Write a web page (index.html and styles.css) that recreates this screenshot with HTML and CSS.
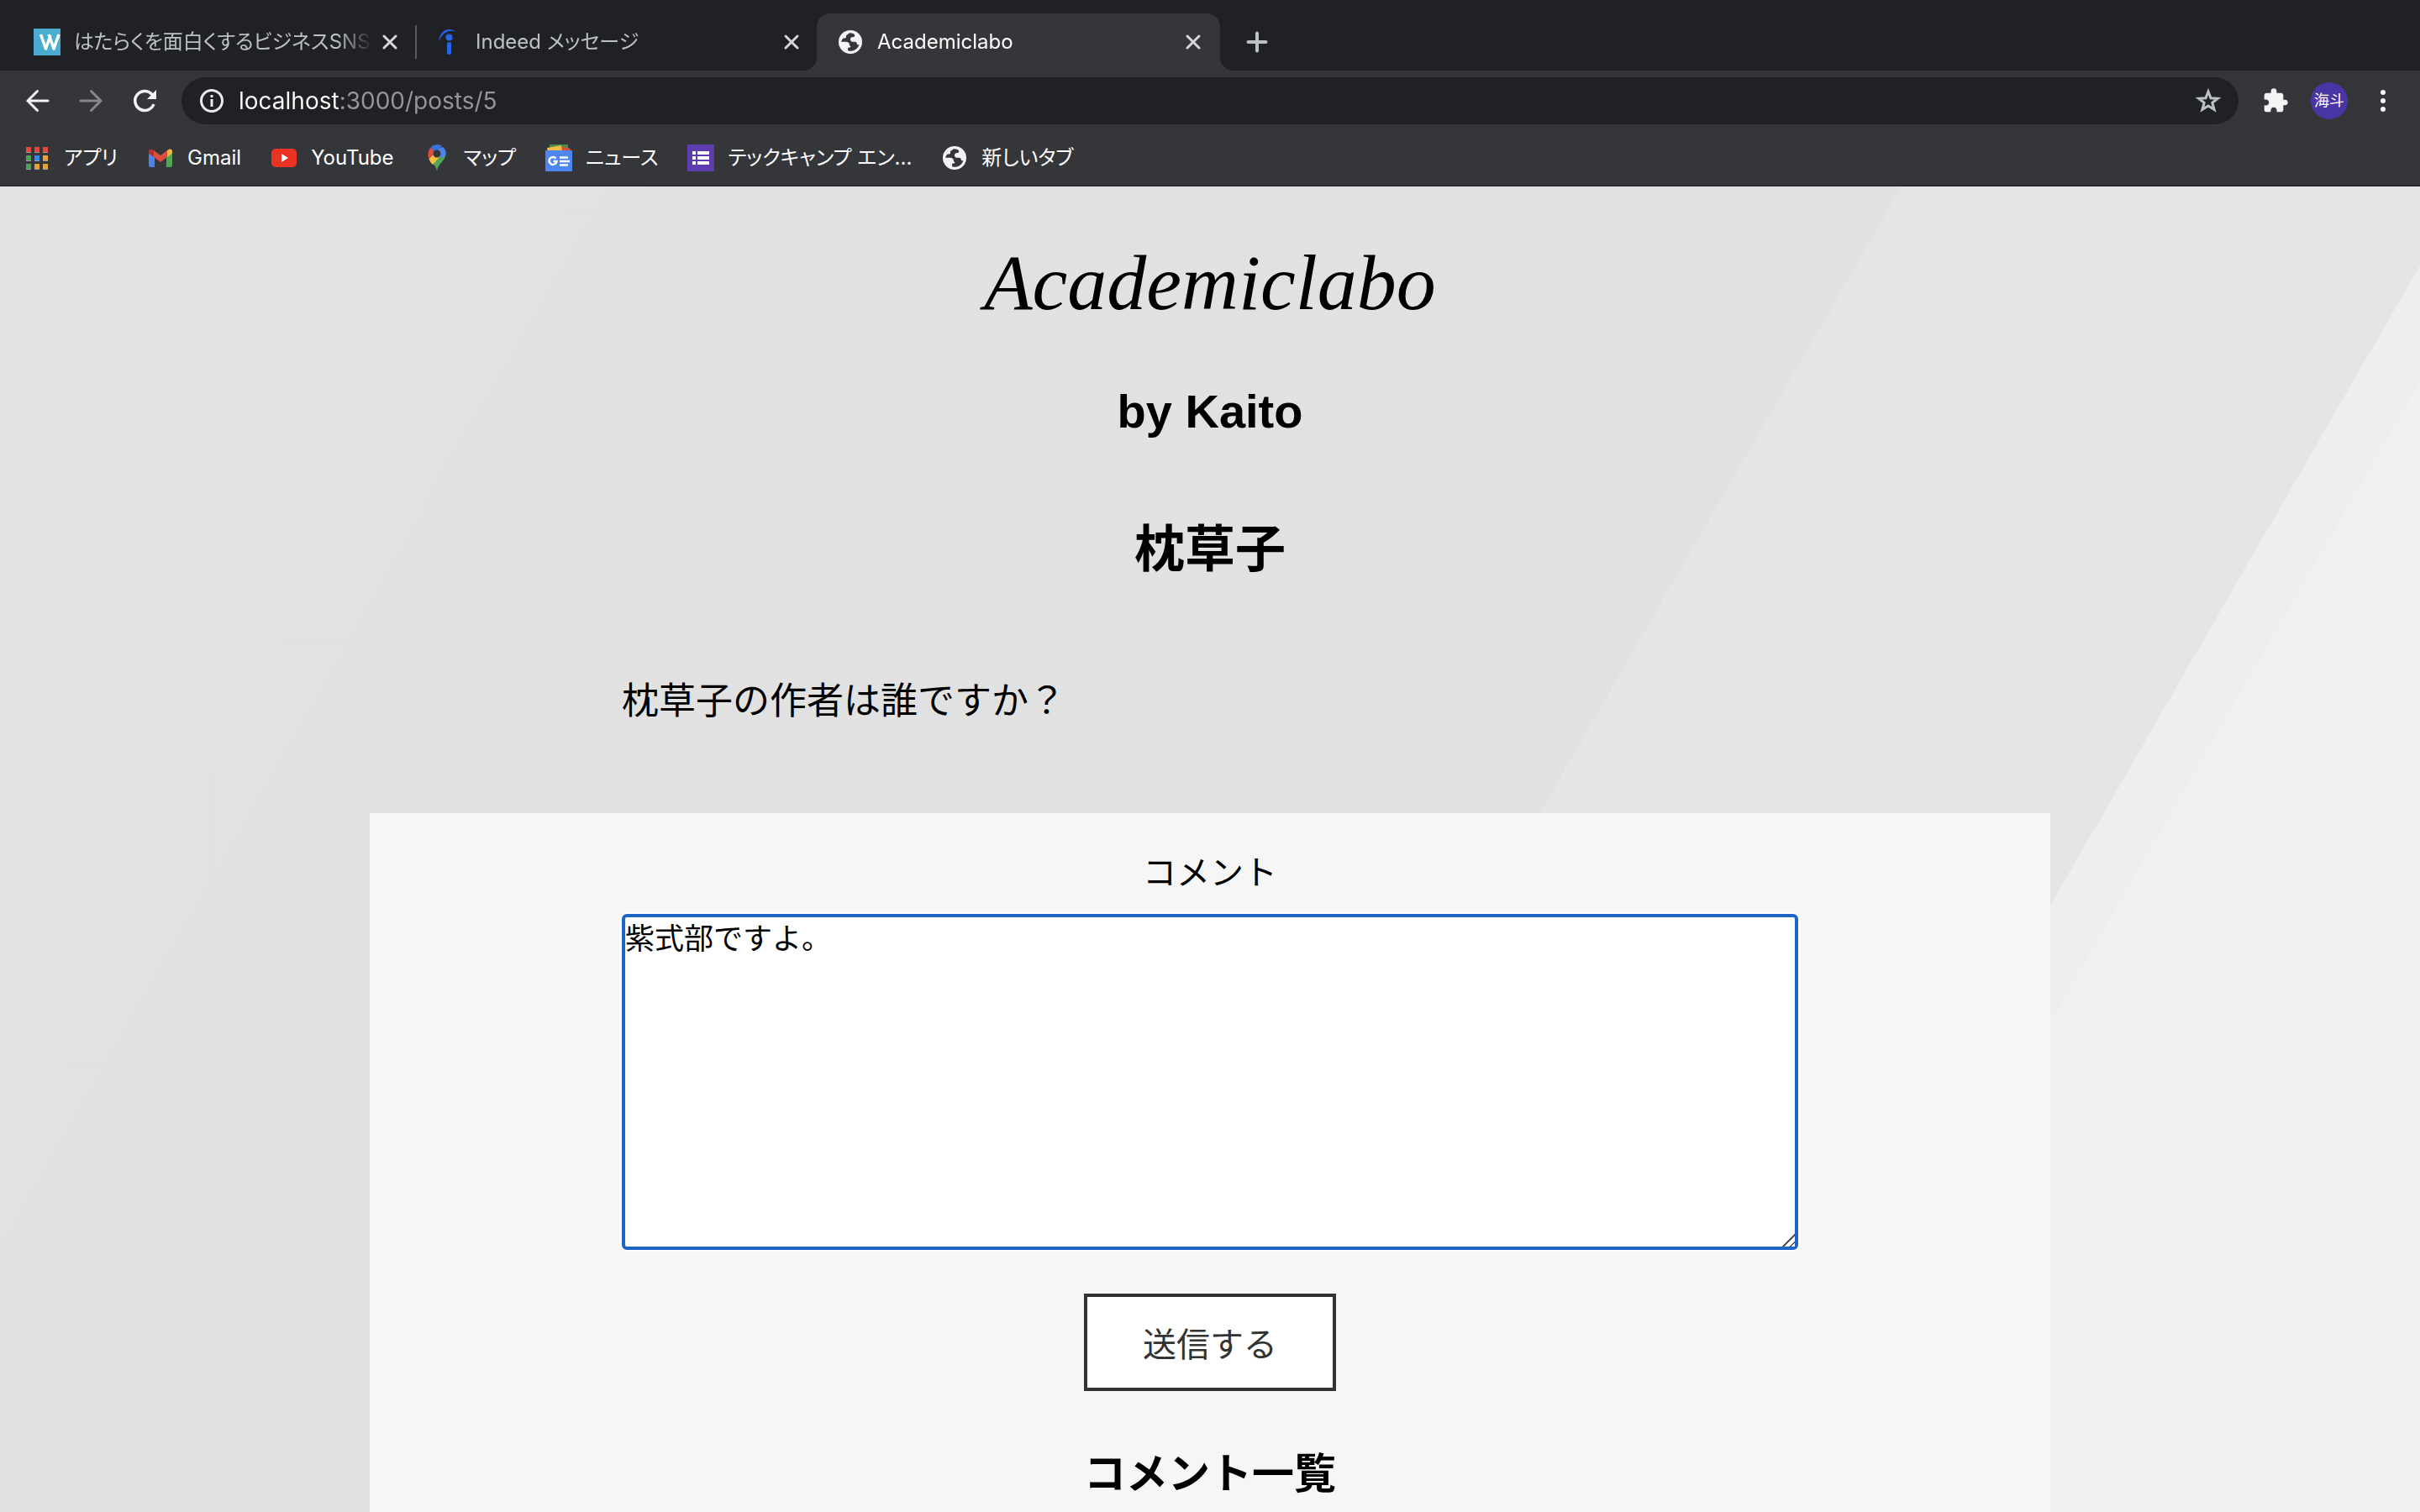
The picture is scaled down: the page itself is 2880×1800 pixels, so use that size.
FILE: index.html
```html
<!DOCTYPE html>
<html lang="ja">
<head>
<meta charset="utf-8">
<title>Academiclabo</title>
<link rel="stylesheet" href="styles.css">
</head>
<body>
<svg class="defs" aria-hidden="true">
  <symbol id="globe" viewBox="0 0 28 28">
    <circle cx="14" cy="14" r="14" fill="#f1f3f4"/>
    <path d="M12.600 3.400C11 5 8.500 5.200 9 7.400c.4 1.800-1 2-2.600 2.200C4.600 9.800 4 11 3.100 13.800h5.600c2.400 0 4.300 1.200 4.300 3.600 0 1.100 1 1.200 1.300 1.800.2.800-.5 1.200-1.700 1.400-1.500.3-1.800 1.200-1.500 2.600l.4 1.200c5.400 1.600 11-1.800 13-7.200-2 .3-2.700-.3-2.800-1.500-.1-2-1.600-2.200-3.500-2-2.200.2-4.200-.5-4.200-2.800 0-2 1.400-2.900 3.400-2.800 1.800.1 1.400-1.600 1.900-2.700C17.500 3.600 15 3 12.600 3.400z" fill="#35363a"/>
  </symbol>
  <symbol id="close" viewBox="0 0 32 32">
    <path d="M9 9l14 14M23 9L9 23" stroke="currentColor" stroke-width="3" stroke-linecap="round"/>
  </symbol>
</svg>

<header class="browser">
  <nav class="tabs" aria-label="タブ">
    <div class="tab">
      <svg class="icon" viewBox="0 0 32 32"><path fill="#4aaccf" d="M0 0h32v32H0z"/><path d="M8.500 7l6 17L20 8M18 7l6 17 6-17" fill="none" stroke="#fff" stroke-width="3.500" stroke-linejoin="round"/></svg>
      <span class="tab-title">はたらくを面白くするビジネスSNS</span>
      <button class="tab-close" aria-label="閉じる"><svg class="icon"><use href="#close"/></svg></button>
    </div>
    <div class="tab divided">
      <svg class="icon" viewBox="0 0 32 32"><path d="M4 16C5 3 15-3 25 4 16 0 8 5 4 16z" fill="#2864e8"/><circle cx="16.500" cy="10.500" r="4" fill="#2864e8"/><rect x="14" y="16" width="5" height="15" rx="2.500" fill="#2864e8"/></svg>
      <span class="tab-title">Indeed メッセージ</span>
      <button class="tab-close" aria-label="閉じる"><svg class="icon"><use href="#close"/></svg></button>
    </div>
    <div class="tab active">
      <svg class="icon globe"><use href="#globe"/></svg>
      <span class="tab-title">Academiclabo</span>
      <button class="tab-close" aria-label="閉じる"><svg class="icon"><use href="#close"/></svg></button>
    </div>
    <button class="new-tab" aria-label="新しいタブ"><svg class="icon" viewBox="0 0 32 32"><path d="M16 5.500v21M5.500 16h21" stroke="currentColor" stroke-width="4" stroke-linecap="round"/></svg></button>
  </nav>

  <div class="toolbar">
    <div class="nav-buttons">
      <button aria-label="戻る"><svg class="icon" viewBox="0 0 32 32"><path d="M29 16H5M16.500 4.500L5 16l11.500 11.500" fill="none" stroke="#f1f3f4" stroke-width="3" stroke-linecap="round"/></svg></button>
      <button aria-label="進む"><svg class="icon" viewBox="0 0 32 32"><path d="M4 16h24M16.500 4.500L28 16 16.500 27.500" fill="none" stroke="#86878a" stroke-width="3" stroke-linecap="round"/></svg></button>
      <button aria-label="再読み込み"><svg class="icon" viewBox="0 0 32 32"><path d="M25 8.500A11.500 11.500 0 1 0 27 20" fill="none" stroke="#f1f3f4" stroke-width="3.500"/><path d="M30 3v11H19z" fill="#f1f3f4"/></svg></button>
    </div>
    <form class="omnibox">
      <svg class="icon" viewBox="0 0 32 32"><circle cx="16" cy="16" r="12.500" fill="none" stroke="#e8eaed" stroke-width="3"/><path d="M14.500 14h3v9h-3zM14.500 9h3v3h-3z" fill="#e8eaed"/></svg>
      <input class="address" type="text" aria-label="アドレス" value="localhost:3000/posts/5">
      <button type="button" aria-label="ブックマークに追加"><svg class="icon" viewBox="0 0 32 32"><path d="M16 5l3 7.800 8.400.4-6.600 5.200 2.300 8.100L16 22l-7.100 4.500 2.300-8.100-6.600-5.200 8.400-.4z" fill="none" stroke="#bdc1c6" stroke-width="3"/></svg></button>
    </form>
    <div class="tools">
      <button aria-label="拡張機能"><svg class="icon" viewBox="0 0 24 24"><path d="M20.500 11H19V7c0-1.100-.9-2-2-2h-4V3.500a2.500 2.500 0 0 0-5 0V5H4c-1.100 0-2 .9-2 2v3.800h1.500c1.500 0 2.700 1.200 2.700 2.700s-1.200 2.700-2.700 2.700H2V20c0 1.100.9 2 2 2h3.800v-1.500c0-1.500 1.200-2.700 2.700-2.700s2.700 1.200 2.700 2.700V22H17c1.100 0 2-.9 2-2v-4h1.500a2.500 2.500 0 0 0 0-5z" fill="#f1f3f4"/></svg></button>
      <button class="avatar" aria-label="プロフィール">海斗</button>
      <button aria-label="メニュー"><svg class="icon" viewBox="0 0 32 32"><g fill="#f1f3f4"><circle cx="16" cy="6" r="3"/><circle cx="16" cy="16" r="3"/><circle cx="16" cy="26" r="3"/></g></svg></button>
    </div>
  </div>

  <nav class="bookmarks" aria-label="ブックマーク">
    <a href="#"><svg class="icon" viewBox="0 0 32 32"><path fill="#9a9da0" d="M3 9h6v1H3zm10 0h6v1h-6zm10 0h6v1h-6zM3 19h6v1H3zm10 0h6v1h-6zm10 0h6v1h-6zM3 29h6v1H3zm10 0h6v1h-6zm10 0h6v1h-6z"/><path fill="#e8453c" d="M3 3h6v6H3zm10 0h6v6h-6zm10 0h6v6h-6z"/><path fill="#4f9d58" d="M3 13h6v6H3zM3 23h6v6H3z"/><path fill="#3b86f0" d="M13 13h6v6h-6z"/><path fill="#e9a234" d="M23 13h6v6h-6zM13 23h6v6h-6zm10 0h6v6h-6z"/></svg>アプリ</a>
    <a href="#"><svg class="icon" viewBox="0 0 32 32"><path fill="#4c83ec" d="M2 10l7 5v12H4a2 2 0 0 1-2-2z"/><path fill="#54a556" d="M30 10l-7 5v12h5a2 2 0 0 0 2-2z"/><path fill="#dc4d41" d="M8 7l8 6 8-6v8l-8 6-8-6z"/><path fill="#b6332b" d="M2 8.500C2 5 5 4.500 8 7v8l-6-4.500z"/><path fill="#f3b93a" d="M30 8.500C30 5 27 4.500 24 7v8l6-4.500z"/></svg>Gmail</a>
    <a href="#"><svg class="icon" viewBox="0 0 32 32"><rect x="1" y="5" width="30" height="22" rx="5" fill="#eb3323"/><path fill="#fff" d="M13 11l8 5-8 5z"/></svg>YouTube</a>
    <a href="#"><svg class="icon" viewBox="0 0 32 32"><path fill="#54a556" d="M16 31.500c-1-5-4-8-7-11L26 8c2.500 11-8 13-10 23.500z"/><path fill="#f6bf3f" d="M6.500 17L14 9l6 5-9 10c-2-2-3.600-4-4.500-7z"/><path fill="#4c83ec" d="M17 5l6-2c3 2.500 4 5 3.500 8.500L16 23l-3-8z" clip-path="polygon(0 0, 32px 0, 32px 5px, 12px 20px)"/><path fill="#dc4d41" d="M8.500 3.800L15 9l-8.500 8C4.500 12 5.500 7 8.500 3.800z"/><path fill="#3971d9" d="M8.500 3.800C12-.8 19-1 22 2L14 9z"/><circle cx="16" cy="11" r="4.500" fill="#35363a"/></svg>マップ</a>
    <a href="#"><svg class="icon" viewBox="0 0 32 32"><path fill="#468f4b" d="M5 0h22v9H5z"/><path fill="#dc4d41" d="M18 2l12 3-1 6H16z"/><path fill="#f3bd42" d="M2 4l17-3 1 8H3z"/><rect y="7" width="32" height="25" rx="1" fill="#4c86ee"/><path d="M12.500 16.500A4.500 4.500 0 1 0 13.500 20H9.500M17 15.500h10M17 20h12M17 24.500h10" fill="none" stroke="#fff" stroke-width="2.500"/></svg>ニュース</a>
    <a href="#"><svg class="icon" viewBox="0 0 32 32"><rect width="32" height="32" rx="1" fill="#5f3db0"/><path fill="#fff" d="M6 8h4v4H6zm6 0h14v4H12zM6 14h4v4H6zm6 0h14v4H12zM6 20h4v4H6zm6 0h14v4H12z"/></svg>テックキャンプ エン...</a>
    <a href="#"><svg class="icon globe"><use href="#globe"/></svg>新しいタブ</a>
  </nav>
</header>

<main class="page">
  <h1 class="logo">Academiclabo</h1>
  <p class="author">by Kaito</p>
  <h2 class="title">枕草子</h2>
  <p class="question">枕草子の作者は誰ですか？</p>
  <section class="comments">
    <form class="comment-form">
      <label for="comment">コメント</label>
      <textarea id="comment">紫式部ですよ。</textarea>
      <button type="button" class="submit">送信する</button>
    </form>
    <h3 class="list-title">コメント一覧</h3>
  </section>
</main>
</body>
</html>
```

FILE: styles.css
```css
* {
  box-sizing: border-box;
}

body {
  display: flex;
  flex-direction: column;
  min-height: 100vh;
  margin: 0;
  color: #000;
  font-family: "Noto Sans CJK JP", sans-serif;
}

h1, h2, h3, p {
  margin: 0;
}

button {
  padding: 0;
  border: 0;
  background: none;
  color: inherit;
  font: inherit;
}

.defs {
  position: absolute;
  width: 0;
  height: 0;
}

.icon {
  display: block;
  flex: none;
  width: 32px;
  height: 32px;
}

.icon.globe {
  padding: 2px;
}

/* Browser window */

.browser {
  border-bottom: 2px solid #28292c;
  background: #35363a;
  color: #fff;
  font-family: Inter, "Noto Sans CJK JP", sans-serif;
  font-size: 24px;
  line-height: 32px;
  font-feature-settings: "palt";
}

.tabs {
  display: flex;
  align-items: center;
  height: 84px;
  padding: 16px 16px 0;
  background: #202124;
}

.tab {
  position: relative;
  display: flex;
  align-items: center;
  width: 478px;
  height: 68px;
  padding: 0 14px 0 24px;
  color: #bdc1c6;
}

.tab.divided::before {
  content: "";
  position: absolute;
  left: 0;
  width: 2px;
  height: 40px;
  background: #5a5b5e;
}

.tab.active {
  width: 480px;
  padding-right: 16px;
  border-radius: 16px 16px 0 0;
  background: #35363a;
  color: #fff;
}

.tab.active::before,
.tab.active::after {
  content: "";
  position: absolute;
  bottom: 0;
  width: 16px;
  height: 16px;
}

.tab.active::before {
  right: 100%;
  background: radial-gradient(circle at 0 0, #202124 16px, #35363a 16px);
}

.tab.active::after {
  left: 100%;
  background: radial-gradient(circle at 100% 0, #202124 16px, #35363a 16px);
}

.tab-title {
  flex: 1;
  margin: 0 4px 0 16px;
  overflow: hidden;
  white-space: nowrap;
  mask-image: linear-gradient(to left, transparent, #000 44px);
}

.tab-close {
  color: #d5d7da;
}

.new-tab {
  margin-left: 28px;
  color: #bdc1c6;
}

.toolbar {
  display: flex;
  align-items: center;
  gap: 28px;
  height: 72px;
  padding: 0 28px;
}

.nav-buttons,
.tools {
  display: flex;
  align-items: center;
  gap: 32px;
}

.tools {
  gap: 26px;
}

.omnibox {
  display: flex;
  flex: 1;
  align-items: center;
  gap: 16px;
  height: 56px;
  padding: 0 20px;
  border-radius: 28px;
  background: #202124;
}

.address {
  flex: 1;
  min-width: 0;
  padding: 0;
  border: 0;
  outline: 0;
  background: linear-gradient(to right, #fff 120px, #95979a 120px);
  background-clip: text;
  color: transparent;
  font: inherit;
  font-size: 28px;
}

.avatar {
  width: 44px;
  height: 44px;
  border-radius: 50%;
  background: #4a35a4;
  font-size: 18px;
}

.bookmarks {
  display: flex;
  align-items: center;
  gap: 35px;
  height: 64px;
  padding: 0 28px;
}

.bookmarks a {
  display: flex;
  align-items: center;
  gap: 16px;
  color: #fff;
  text-decoration: none;
}

/* Post page */

.page {
  display: flex;
  flex: 1;
  flex-direction: column;
  align-items: center;
  padding-top: 62px;
  background: linear-gradient(120deg,
    #e2e2e2 0, #e1e1e1 59.7%,
    #e6e6e6 59.7%, #e5e5e5 77.4%,
    #eee 77.4%, #eee 79.5%,
    #f0f0f0 79.5%, #f0f0f0 100%);
}

.logo {
  font-family: "Apple Chancery", "Liberation Serif", serif;
  font-size: 94px;
  font-style: italic;
  font-weight: 400;
  line-height: 104px;
}

.author {
  margin-top: 60px;
  font-family: "Liberation Sans", "Noto Sans CJK JP", sans-serif;
  font-size: 56px;
  font-weight: 700;
  line-height: 84px;
}

.title {
  margin-top: 72px;
  font-size: 60px;
  line-height: 90px;
}

.question {
  width: 1400px;
  max-width: 100%;
  margin: 104px 0;
  font-size: 44px;
  line-height: 66px;
}

.comments {
  flex: 1;
  width: 2000px;
  max-width: 100%;
  padding: 38px 0 12px;
  background: #f6f6f6;
  text-align: center;
}

.comment-form {
  display: flex;
  flex-direction: column;
  align-items: center;
  font-size: 40px;
  line-height: 60px;
}

.comment-form textarea {
  width: 70%;
  height: 400px;
  margin: 22px 0 52px;
  padding: 0;
  border: 4px solid #1f62c8;
  border-radius: 6px;
  outline: 0;
  box-shadow: 0 0 0 2px #fff;
  background: #fff;
  color: #000;
  font: inherit;
  font-size: 35px;
  line-height: 46px;
}

.comment-form textarea::-webkit-resizer {
  background: linear-gradient(135deg, #fff 50%, #555 50%, #555 57%, #fff 57%, #fff 78%, #555 78%, #555 85%, #fff 85%);
}

.submit {
  width: 300px;
  height: 116px;
  border: 4px solid #333;
  background: #fff;
  color: #333;
}

.list-title {
  margin-top: 56px;
  font-size: 50px;
  line-height: 76px;
}
```
